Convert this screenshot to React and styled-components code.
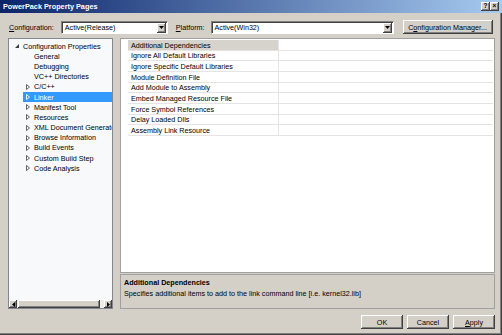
import React from 'react';
import styled, { createGlobalStyle } from 'styled-components';

const FONT = `"Liberation Sans", Arial, sans-serif`;

const Global = createGlobalStyle`
  html, body { margin: 0; padding: 0; background: #D4D0C8; }
  body { font-family: ${FONT}; }
  * { box-sizing: border-box; }
`;

const raised = `
  background: #D4D0C8;
  box-shadow: inset -1px -1px 0 #404040, inset 1px 1px 0 #FFFFFF, inset -2px -2px 0 #808080;
`;

const Window = styled.div`
  width: 502px;
  height: 335px;
  background: #D4D0C8;
  display: flex;
  flex-direction: column;
  font-family: ${FONT};
  font-size: 7.2px;
  color: #000;
  overflow: hidden;
  box-shadow: inset -1px -1px 0 #404040, inset -2px -2px 0 #808080;
`;

const TitleBar = styled.div`
  height: 13px;
  flex: none;
  display: flex;
  align-items: center;
  justify-content: space-between;
  padding: 0 3px 0 3px;
  background: linear-gradient(to right, #0A246A 0%, #A6CAF0 100%);
`;

const TitleText = styled.div`
  color: #fff;
  font-weight: bold;
  font-size: 7.3px;
  white-space: nowrap;
`;

const TitleButtons = styled.div`
  display: flex;
  gap: 0;
`;

const CapButton = styled.div`
  ${raised}
  width: 9px;
  height: 9px;
  display: flex;
  align-items: center;
  justify-content: center;
  font-size: 6.5px;
  font-weight: bold;
  line-height: 1;
  color: #000;
`;

const Toolbar = styled.div`
  height: 14px;
  margin-top: 7px;
  display: flex;
  align-items: center;
  padding-left: 9px;
  flex: none;
`;

const Label = styled.span`
  margin-left: ${p => p.$ml || 0}px;
  white-space: nowrap;
`;

const U = styled.span`
  text-decoration: underline;
`;

const Combo = styled.div`
  width: ${p => p.$w}px;
  height: 13px;
  margin-left: ${p => p.$ml || 0}px;
  background: #fff;
  border: 1px solid;
  border-color: #808080 #FFFFFF #FFFFFF #808080;
  box-shadow: inset 1px 1px 0 #404040;
  display: flex;
  align-items: center;
  justify-content: space-between;
  padding: 1px 1px 0 3px;
`;

const DropButton = styled.div`
  ${raised}
  width: 9px;
  height: 10px;
  display: flex;
  align-items: center;
  justify-content: center;
`;

const PushButton = styled.div`
  ${raised}
  width: ${p => p.$w}px;
  height: 14px;
  margin-left: ${p => p.$ml || 0}px;
  display: flex;
  align-items: center;
  justify-content: center;
  white-space: nowrap;
`;

const Main = styled.div`
  display: flex;
  padding-left: 8px;
  margin-top: 4px;
  height: 271px;
  flex: none;
`;

const Tree = styled.div`
  width: 105px;
  height: 271px;
  border: 1px solid #828790;
  background: #F8F9FB;
  display: flex;
  flex-direction: column;
`;

const TreeBody = styled.div`
  flex: 1;
  padding-top: 2px;
  overflow: hidden;
`;

const TreeRow = styled.div`
  height: 10.2px;
  display: flex;
  align-items: center;
  margin-left: ${p => p.$indent}px;
  background: ${p => (p.$selected ? '#3399FF' : 'transparent')};
  color: ${p => (p.$selected ? '#fff' : '#000')};
  white-space: nowrap;
  overflow: hidden;
`;

const ArrowSlot = styled.span`
  width: 11px;
  flex: none;
  display: flex;
  align-items: center;
  padding-left: ${p => p.$pl}px;
`;

const HScroll = styled.div`
  height: 8px;
  display: flex;
  flex: none;
`;

const ScrollBtn = styled.div`
  ${raised}
  width: 8px;
  height: 8px;
  display: flex;
  align-items: center;
  justify-content: center;
`;

const Track = styled.div`
  flex: 1;
  padding-left: 1px;
  background: #EEEDE8;
  display: flex;
`;

const Thumb = styled.div`
  ${raised}
  width: 82px;
  height: 8px;
`;

const RightCol = styled.div`
  margin-left: 7px;
  width: 375px;
  display: flex;
  flex-direction: column;
`;

const GridPanel = styled.div`
  height: 235px;
  border: 1px solid #A0A0A0;
  background: #fff;
  padding: 1px 1px 0 7px;
`;

const GridRow = styled.div`
  display: grid;
  grid-template-columns: 151px 1fr;
  height: 10.67px;
  border-bottom: 1px solid #E4E4E4;
`;

const NameCell = styled.div`
  padding: 1px 0 0 3px;
  display: flex;
  align-items: center;
  background: ${p => (p.$selected ? '#D6D3CD' : '#fff')};
  border-right: 1px solid #E4E4E4;
  white-space: nowrap;
  overflow: hidden;
`;

const ValueCell = styled.div`
  background: #fff;
`;

const Desc = styled.div`
  margin-top: 1px;
  height: 35px;
  border: 1px solid #A0A0A0;
  padding: 3px 3px;
  display: flex;
  flex-direction: column;
  gap: 2px;
`;

const DescTitle = styled.div`
  font-weight: bold;
  line-height: 9px;
`;

const DescText = styled.div`
  line-height: 9px;
`;

const Footer = styled.div`
  display: flex;
  justify-content: flex-end;
  padding-right: 7px;
  margin-top: 6px;
`;

const DownArrow = () => (
  <svg width="5" height="3" viewBox="0 0 5 3"><polygon points="0,0 5,0 2.5,3" fill="#000" /></svg>
);

const Expanded = () => (
  <svg width="4" height="4" viewBox="0 0 4 4"><polygon points="4,0 4,4 0,4" fill="#3C3C3C" /></svg>
);

const Collapsed = ({ color }) => (
  <svg width="4" height="6" viewBox="0 0 4 6">
    <polygon points="0.5,0.5 3.5,3 0.5,5.5" fill="none" stroke={color} strokeWidth="0.9" />
  </svg>
);

const LeftArrow = () => (
  <svg width="3" height="5" viewBox="0 0 3 5"><polygon points="3,0 3,5 0,2.5" fill="#000" /></svg>
);
const RightArrow = () => (
  <svg width="3" height="5" viewBox="0 0 3 5"><polygon points="0,0 0,5 3,2.5" fill="#000" /></svg>
);

const treeItems = [
  { label: 'General' },
  { label: 'Debugging' },
  { label: 'VC++ Directories' },
  { label: 'C/C++', collapsed: true },
  { label: 'Linker', collapsed: true, selected: true },
  { label: 'Manifest Tool', collapsed: true },
  { label: 'Resources', collapsed: true },
  { label: 'XML Document Generator', collapsed: true },
  { label: 'Browse Information', collapsed: true },
  { label: 'Build Events', collapsed: true },
  { label: 'Custom Build Step', collapsed: true },
  { label: 'Code Analysis', collapsed: true },
];

const gridItems = [
  'Additional Dependencies',
  'Ignore All Default Libraries',
  'Ignore Specific Default Libraries',
  'Module Definition File',
  'Add Module to Assembly',
  'Embed Managed Resource File',
  'Force Symbol References',
  'Delay Loaded Dlls',
  'Assembly Link Resource',
];

export default function App() {
  return (
    <Window>
      <Global />
      <TitleBar>
        <TitleText>PowerPack Property Pages</TitleText>
        <TitleButtons>
          <CapButton>?</CapButton>
          <CapButton>×</CapButton>
        </TitleButtons>
      </TitleBar>

      <Toolbar>
        <Label><U>C</U>onfiguration:</Label>
        <Combo $w={107} $ml={7}>
          <span>Active(Release)</span>
          <DropButton><DownArrow /></DropButton>
        </Combo>
        <Label $ml={8}><U>P</U>latform:</Label>
        <Combo $w={183} $ml={6}>
          <span>Active(Win32)</span>
          <DropButton><DownArrow /></DropButton>
        </Combo>
        <PushButton $w={90} $ml={9}>C<U>o</U>nfiguration Manager...</PushButton>
      </Toolbar>

      <Main>
        <Tree>
          <TreeBody>
            <TreeRow $indent={3}>
              <ArrowSlot $pl={3}><Expanded /></ArrowSlot>
              Configuration Properties
            </TreeRow>
            {treeItems.map(it => (
              <TreeRow key={it.label} $indent={14} $selected={it.selected}>
                <ArrowSlot $pl={3}>
                  {it.collapsed && <Collapsed color={it.selected ? '#fff' : '#555'} />}
                </ArrowSlot>
                {it.label}
              </TreeRow>
            ))}
          </TreeBody>
          <HScroll>
            <ScrollBtn><LeftArrow /></ScrollBtn>
            <Track><Thumb /></Track>
            <ScrollBtn><RightArrow /></ScrollBtn>
          </HScroll>
        </Tree>

        <RightCol>
          <GridPanel>
            {gridItems.map((name, i) => (
              <GridRow key={name}>
                <NameCell $selected={i === 0}>{name}</NameCell>
                <ValueCell />
              </GridRow>
            ))}
          </GridPanel>
          <Desc>
            <DescTitle>Additional Dependencies</DescTitle>
            <DescText>Specifies additional items to add to the link command line [i.e. kernel32.lib]</DescText>
          </Desc>
        </RightCol>
      </Main>

      <Footer>
        <PushButton $w={42}>OK</PushButton>
        <PushButton $w={42} $ml={4}>Cancel</PushButton>
        <PushButton $w={42} $ml={4}><U>A</U>pply</PushButton>
      </Footer>
    </Window>
  );
}
